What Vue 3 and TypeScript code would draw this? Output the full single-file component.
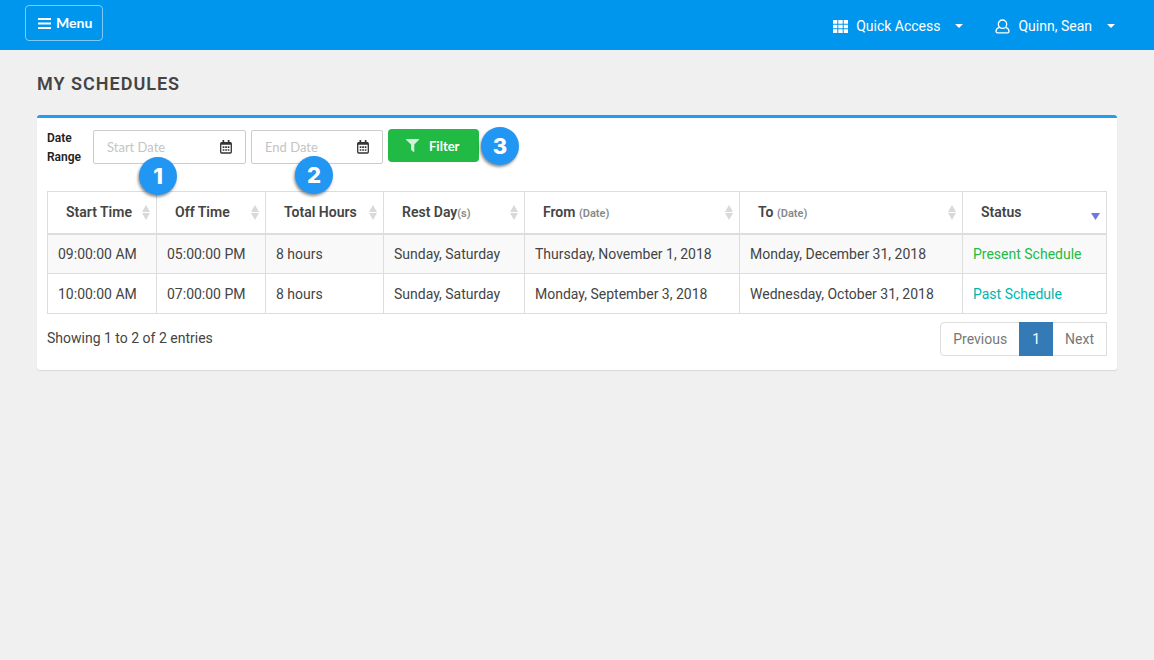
<script setup lang="ts">
import { ref } from 'vue'

interface Column {
  key: string
  label: string
  note?: string
  spaced?: boolean
  width: string
  sorted?: boolean
}

interface Schedule {
  start: string
  off: string
  hours: string
  rest: string
  from: string
  to: string
  status: string
  state: 'present' | 'past'
}

const columns: Column[] = [
  { key: 'start', label: 'Start Time', width: 'w-time' },
  { key: 'off', label: 'Off Time', width: 'w-time' },
  { key: 'hours', label: 'Total Hours', width: 'w-hours' },
  { key: 'rest', label: 'Rest Day', note: '(s)', width: 'w-rest' },
  { key: 'from', label: 'From', note: '(Date)', spaced: true, width: 'w-from' },
  { key: 'to', label: 'To', note: '(Date)', spaced: true, width: 'w-to' },
  { key: 'status', label: 'Status', width: 'w-status', sorted: true },
]

const schedules: Schedule[] = [
  {
    start: '09:00:00 AM', off: '05:00:00 PM', hours: '8 hours', rest: 'Sunday, Saturday',
    from: 'Thursday, November 1, 2018', to: 'Monday, December 31, 2018',
    status: 'Present Schedule', state: 'present',
  },
  {
    start: '10:00:00 AM', off: '07:00:00 PM', hours: '8 hours', rest: 'Sunday, Saturday',
    from: 'Monday, September 3, 2018', to: 'Wednesday, October 31, 2018',
    status: 'Past Schedule', state: 'past',
  },
]

const startDate = ref('')
const endDate = ref('')
</script>

<template>
  <div class="page">
    <header class="topbar">
      <button type="button" class="menu-btn">
        <svg width="13" height="11" viewBox="0 0 13 11" aria-hidden="true">
          <path d="M0 1h13M0 5.500h13M0 10h13" stroke="#fff" stroke-width="1.800" />
        </svg>
        Menu
      </button>
      <nav class="topnav">
        <button type="button" class="nav-btn">
          <svg class="nav-icon" width="15" height="13" viewBox="0 0 15 13" fill="#fff" aria-hidden="true">
            <path d="M0 0h4.3v3.7H0zM5.3 0h4.4v3.7H5.3zM10.7 0H15v3.7h-4.3zM0 4.7h4.3v3.6H0zM5.3 4.7h4.4v3.6H5.3zM10.7 4.7H15v3.6h-4.3zM0 9.3h4.3V13H0zM5.3 9.3h4.4V13H5.3zM10.7 9.3H15V13h-4.3z" />
          </svg>
          Quick Access
          <svg class="caret" width="8" height="4" viewBox="0 0 8 4" fill="#fff" aria-hidden="true"><path d="M0 0h8L4 4z" /></svg>
        </button>
        <button type="button" class="nav-btn">
          <svg class="nav-icon" width="15" height="15" viewBox="0 0 15 15" fill="none" stroke="#fff" stroke-width="1.3" aria-hidden="true">
            <circle cx="7.5" cy="5.2" r="4.2" />
            <path d="M4.400 8.300C2 9 1 10.300 1 12.200c0 1 .6 1.700 1.700 1.700h9.600c1.100 0 1.700-.7 1.700-1.700 0-1.900-1-3.200-3.400-3.900" />
          </svg>
          Quinn, Sean
          <svg class="caret" width="8" height="4" viewBox="0 0 8 4" fill="#fff" aria-hidden="true"><path d="M0 0h8L4 4z" /></svg>
        </button>
      </nav>
    </header>

    <main class="content">
      <h1>MY SCHEDULES</h1>
      <section class="panel">
        <form class="filters" @submit.prevent>
          <span class="range-label">Date Range</span>
          <div class="field field-start">
            <input v-model="startDate" type="text" placeholder="Start Date" aria-label="Start Date">
            <svg width="12" height="14" viewBox="0 0 12 14" aria-hidden="true">
              <rect x=".7" y="2.7" width="10.600" height="10.300" rx="1" fill="none" stroke="#333" stroke-width="1.300" />
              <path d="M1 2.300h10v2.400H1zM2.500 0h1.700v3H2.500zM7.800 0h1.700v3H7.800z" fill="#333" />
              <path d="M2.700 6.300h1.700v1.600H2.700zM5.200 6.300h1.700v1.600H5.200zM7.700 6.300h1.700v1.600H7.700zM2.700 9.200h1.700v1.600H2.700zM5.200 9.200h1.700v1.600H5.200zM7.700 9.200h1.700v1.600H7.700z" fill="#333" />
            </svg>
            <span class="badge badge-start">1</span>
          </div>
          <div class="field field-end">
            <input v-model="endDate" type="text" placeholder="End Date" aria-label="End Date">
            <svg width="12" height="14" viewBox="0 0 12 14" aria-hidden="true">
              <rect x=".7" y="2.7" width="10.600" height="10.300" rx="1" fill="none" stroke="#333" stroke-width="1.300" />
              <path d="M1 2.300h10v2.400H1zM2.500 0h1.700v3H2.500zM7.800 0h1.700v3H7.800z" fill="#333" />
              <path d="M2.700 6.300h1.700v1.600H2.700zM5.200 6.300h1.700v1.600H5.200zM7.700 6.300h1.700v1.600H7.700zM2.700 9.200h1.700v1.600H2.700zM5.200 9.200h1.700v1.600H5.200zM7.700 9.200h1.700v1.600H7.700z" fill="#333" />
            </svg>
            <span class="badge badge-end">2</span>
          </div>
          <div class="submit">
            <button type="submit" class="filter-btn">
              <svg width="13" height="13" viewBox="0 0 13 13" aria-hidden="true">
                <path d="M.5 0h12c.5 0 .7.500.3.900L8.300 5.500V12.600c0 .4-.4.500-.7.300L5 10.700V5.500L.2.900C-.2.500 0 0 .5 0z" fill="#d3f1da" />
              </svg>
              Filter
            </button>
            <span class="badge badge-filter">3</span>
          </div>
        </form>

        <table>
          <colgroup>
            <col v-for="c in columns" :key="c.key" :class="c.width">
          </colgroup>
          <thead>
            <tr>
              <th v-for="c in columns" :key="c.key" scope="col" :aria-sort="c.sorted ? 'descending' : undefined">
                <div class="head">
                  <span>{{ c.label + (c.spaced ? ' ' : '') }}<small v-if="c.note">{{ c.note }}</small></span>
                  <svg v-if="c.sorted" class="sorted" width="9" height="7" viewBox="0 0 9 7" aria-hidden="true"><path d="M0 0h9L4.500 7z" fill="#7078e0" /></svg>
                  <svg v-else width="8" height="15" viewBox="0 0 8 15" aria-hidden="true"><path d="M0 7l4-7 4 7zM0 8h8l-4 7z" fill="#d9d9d9" /></svg>
                </div>
              </th>
            </tr>
          </thead>
          <tbody>
            <tr v-for="s in schedules" :key="s.start">
              <td>{{ s.start }}</td>
              <td>{{ s.off }}</td>
              <td>{{ s.hours }}</td>
              <td>{{ s.rest }}</td>
              <td>{{ s.from }}</td>
              <td>{{ s.to }}</td>
              <td :class="s.state">{{ s.status }}</td>
            </tr>
          </tbody>
        </table>

        <footer class="table-footer">
          <span>Showing 1 to 2 of 2 entries</span>
          <nav class="pager" aria-label="Pages">
            <a href="#">Previous</a>
            <a href="#" class="current" aria-current="page">1</a>
            <a href="#">Next</a>
          </nav>
        </footer>
      </section>
    </main>
  </div>
</template>

<style>
body {
  background: #f0f0f0;
}
</style>

<style scoped>
.page {
  min-height: 100vh;
  background: #f0f0f0;
  color: #444;
  font: 14px/20px Roboto, sans-serif;
}
.page *,
.page {
  box-sizing: border-box;
}
button,
input {
  font: inherit;
}
.topbar {
  display: flex;
  justify-content: space-between;
  height: 50px;
  padding: 5px 31px 0 25px;
  background: #0096ed;
  color: #fff;
}
.menu-btn {
  display: flex;
  align-items: center;
  gap: 5px;
  height: 36px;
  padding: 0 10px 0 12px;
  border: 1px solid #7fcaf6;
  border-radius: 4px;
  background: transparent;
  color: #fff;
  font: bold 14px/20px Lato, sans-serif;
}
.topnav {
  display: flex;
  gap: 16px;
  height: 42px;
}
.nav-btn {
  display: flex;
  align-items: center;
  padding: 0 8px;
  border: 0;
  background: transparent;
  color: #fff;
}
.nav-icon {
  margin-right: 8px;
}
.caret {
  margin-left: 15px;
}
.content {
  padding: 24px 37px;
}
h1 {
  margin: 0 0 21px;
  font-size: 18px;
  line-height: 20px;
  font-weight: 600;
  letter-spacing: 1px;
}
.panel {
  padding: 11px 10px 14px;
  border-top: 3px solid #1e9ff2;
  border-radius: 3px;
  background: #fff;
  box-shadow: 0 1px 1px rgba(0, 0, 0, 0.1);
}
.filters {
  display: flex;
  align-items: flex-start;
  height: 62px;
}
.range-label {
  width: 46px;
  padding-right: 8px;
  color: #222;
  font-size: 12px;
  line-height: 19px;
  font-weight: 600;
}
.field {
  position: relative;
  display: flex;
  align-items: center;
  height: 34px;
  margin: 1px 5px 0 0;
  padding: 0 13px;
  border: 1px solid #ccc;
  border-radius: 2px;
}
.field-start {
  width: 153px;
}
.field-end {
  width: 132px;
}
.field input {
  flex: 1;
  min-width: 0;
  padding: 0;
  border: 0;
  outline: 0;
  background: transparent;
  font: 13px/20px Lato, sans-serif;
}
.field input::placeholder {
  color: #c4c4c4;
}
.submit {
  position: relative;
}
.filter-btn {
  display: flex;
  align-items: center;
  gap: 10px;
  height: 33px;
  padding: 0 20px 0 18px;
  border: 0;
  border-radius: 4px;
  background: #21ba45;
  color: #fff;
  font: bold 13px/20px Lato, sans-serif;
}
.badge {
  position: absolute;
  width: 38px;
  height: 38px;
  border-radius: 50%;
  background: #2196f3;
  box-shadow: -1px 2px 3px rgba(0, 0, 0, 0.45);
  color: #fff;
  font: 800 22px/38px Inter, sans-serif;
  text-align: center;
}
.badge-start {
  top: 26px;
  left: 45px;
}
.badge-end {
  top: 25px;
  left: 43px;
}
.badge-filter {
  top: -2px;
  left: 93px;
}
table {
  width: 100%;
  table-layout: fixed;
  border-collapse: collapse;
}
.w-time {
  width: 109px;
}
.w-hours {
  width: 118px;
}
.w-rest {
  width: 141px;
}
.w-from {
  width: 215px;
}
.w-to {
  width: 223px;
}
.w-status {
  width: 144px;
}
th,
td {
  height: 40px;
  border: 1px solid #ddd;
  text-align: left;
  white-space: nowrap;
}
th {
  height: 42px;
  padding: 0 6px 0 18px;
  border-bottom-width: 2px;
  font-weight: 600;
}
td {
  padding: 0 10px;
}
.head {
  display: flex;
  align-items: center;
  justify-content: space-between;
  line-height: 20px;
}
small {
  color: #888;
  font-size: 11px;
  line-height: 1;
}
.sorted {
  margin-top: 8px;
}
tbody tr:nth-child(odd) {
  background: #f9f9f9;
}
.present {
  color: #21ba45;
}
.past {
  color: #00b5ad;
}
.table-footer {
  display: flex;
  justify-content: space-between;
  margin-top: 8px;
  line-height: 32px;
}
.pager {
  display: flex;
  border: 1px solid #ddd;
  border-radius: 4px 0 0 4px;
}
.pager a {
  padding: 0 12px;
  color: #777;
  text-decoration: none;
}
.pager .current {
  margin: -1px 0;
  padding: 1px 13px;
  background: #337ab7;
  color: #fff;
}
</style>
